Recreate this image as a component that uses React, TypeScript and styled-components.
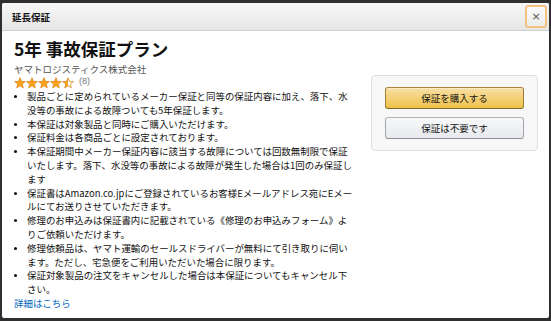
import React from 'react';
import styled, { createGlobalStyle } from 'styled-components';

const GlobalStyle = createGlobalStyle`
  html, body {
    margin: 0;
    padding: 0;
    background: #2f2f2f;
  }
  body {
    font-family: "Noto Sans CJK JP", "Noto Sans", sans-serif;
    color: #111;
  }
`;

const Page = styled.div`
  width: 551px;
  height: 321px;
  padding: 3px 2px;
  box-sizing: border-box;
  background: #2f2f2f;
`;

const Modal = styled.div`
  height: 315px;
  background: #fff;
  border-radius: 2px;
  overflow: hidden;
  display: flex;
  flex-direction: column;
`;

const Header = styled.div`
  height: 27px;
  display: flex;
  align-items: center;
  justify-content: space-between;
  padding: 0 2px 0 10px;
  background: linear-gradient(#f7f7f7, #e6e6e6);
  border-bottom: 1px solid #cfcfcf;
`;

const HeaderTitle = styled.h1`
  margin: 0;
  font-size: 9.5px;
  font-weight: 700;
  line-height: 14px;
  color: #111;
`;

const CloseButton = styled.button`
  width: 22px;
  height: 23px;
  padding: 0;
  display: flex;
  align-items: center;
  justify-content: center;
  border: 2px solid #f1c384;
  border-radius: 3px;
  background: linear-gradient(#fbfbfb, #ececec);
  color: #555;
  font-size: 11px;
  line-height: 1;
  font-family: "DejaVu Sans", sans-serif;
  cursor: pointer;
`;

const Body = styled.div`
  display: flex;
  gap: 16px;
  padding: 5px 11px 0 12px;
`;

const Main = styled.div`
  width: 341px;
  flex-shrink: 0;
`;

const PlanTitle = styled.h2`
  margin: 0;
  font-size: 17.5px;
  line-height: 26px;
  font-weight: 700;
  color: #111;
`;

const Seller = styled.div`
  font-size: 9.5px;
  line-height: 14px;
  color: #555;
`;

const RatingRow = styled.div`
  display: flex;
  align-items: center;
  gap: 5px;
  height: 14px;
`;

const Count = styled.span`
  font-family: "Liberation Sans", sans-serif;
  font-size: 9px;
  line-height: 11px;
  color: #777;
  align-self: flex-start;
`;

const Points = styled.ul`
  margin: 0;
  padding-left: 13px;
  font-size: 9.45px;
  line-height: 13.8px;
  color: #111;

  li::marker {
    font-size: 8px;
  }
`;

const MoreLink = styled.a`
  display: block;
  font-size: 9.45px;
  line-height: 12px;
  color: #0066c0;
  text-decoration: none;
`;

const BuyBox = styled.div`
  width: 167px;
  box-sizing: border-box;
  margin-top: 39px;
  align-self: flex-start;
  padding: 11px 13px;
  display: flex;
  flex-direction: column;
  gap: 8px;
  background: #f8f8f8;
  border: 1px solid #dedede;
  border-radius: 4px;
`;

const ActionButton = styled.button<{ $primary?: boolean }>`
  height: 22px;
  width: 100%;
  padding: 0;
  font-family: inherit;
  font-size: 9.5px;
  color: #111;
  border-radius: 3px;
  cursor: pointer;
  border: 1px solid;
  border-color: ${(p) =>
    p.$primary ? '#a88734 #9c7e31 #846a29' : '#adb1b8 #a2a6ac #8d9096'};
  background: ${(p) =>
    p.$primary
      ? 'linear-gradient(#f7dfa5, #f0c14b)'
      : 'linear-gradient(#f7f8fa, #e7e9ec)'};
  box-shadow: 0 1px 0 rgba(255, 255, 255, 0.4) inset;
`;

const starPoints = (cx: number) => {
  const pts: string[] = [];
  for (let i = 0; i < 10; i++) {
    const r = i % 2 === 0 ? 5.6 : 2.4;
    const a = (Math.PI / 5) * i - Math.PI / 2;
    pts.push(`${(cx + r * Math.cos(a)).toFixed(2)},${(6.3 + r * Math.sin(a)).toFixed(2)}`);
  }
  return pts.join(' ');
};

const Stars = ({ rating }: { rating: number }) => (
  <svg width="60" height="12" viewBox="0 0 60 12">
    <defs>
      <linearGradient id="half">
        <stop offset="50%" stopColor="#ffa41c" />
        <stop offset="50%" stopColor="#fff" />
      </linearGradient>
    </defs>
    {[0, 1, 2, 3, 4].map((i) => {
      const fill = rating >= i + 1 ? '#ffa41c' : rating > i ? 'url(#half)' : '#fff';
      return (
        <polygon
          key={i}
          points={starPoints(6 + i * 12)}
          fill={fill}
          stroke="#d9861c"
          strokeWidth="0.8"
          strokeLinejoin="round"
        />
      );
    })}
  </svg>
);

const points = [
  '製品ごとに定められているメーカー保証と同等の保証内容に加え、落下、水没等の事故による故障ついても5年保証します。',
  '本保証は対象製品と同時にご購入いただけます。',
  '保証料金は各商品ごとに設定されております。',
  '本保証期間中メーカー保証内容に該当する故障については回数無制限で保証いたします。落下、水没等の事故による故障が発生した場合は1回のみ保証します',
  '保証書はAmazon.co.jpにご登録されているお客様Eメールアドレス宛にEメールにてお送りさせていただきます。',
  '修理のお申込みは保証書内に記載されている《修理のお申込みフォーム》よりご依頼いただけます。',
  '修理依頼品は、ヤマト運輸のセールスドライバーが無料にて引き取りに伺います。ただし、宅急便をご利用いただいた場合に限ります。',
  '保証対象製品の注文をキャンセルした場合は本保証についてもキャンセル下さい。',
];

export default function App() {
  return (
    <>
      <GlobalStyle />
      <Page>
        <Modal>
          <Header>
            <HeaderTitle>延長保証</HeaderTitle>
            <CloseButton aria-label="閉じる">×</CloseButton>
          </Header>
          <Body>
            <Main>
              <PlanTitle>5年 事故保証プラン</PlanTitle>
              <Seller>ヤマトロジスティクス株式会社</Seller>
              <RatingRow>
                <Stars rating={4.5} />
                <Count>(8)</Count>
              </RatingRow>
              <Points>
                {points.map((p) => (
                  <li key={p}>{p}</li>
                ))}
              </Points>
              <MoreLink href="#">詳細はこちら</MoreLink>
            </Main>
            <BuyBox>
              <ActionButton $primary>保証を購入する</ActionButton>
              <ActionButton>保証は不要です</ActionButton>
            </BuyBox>
          </Body>
        </Modal>
      </Page>
    </>
  );
}
